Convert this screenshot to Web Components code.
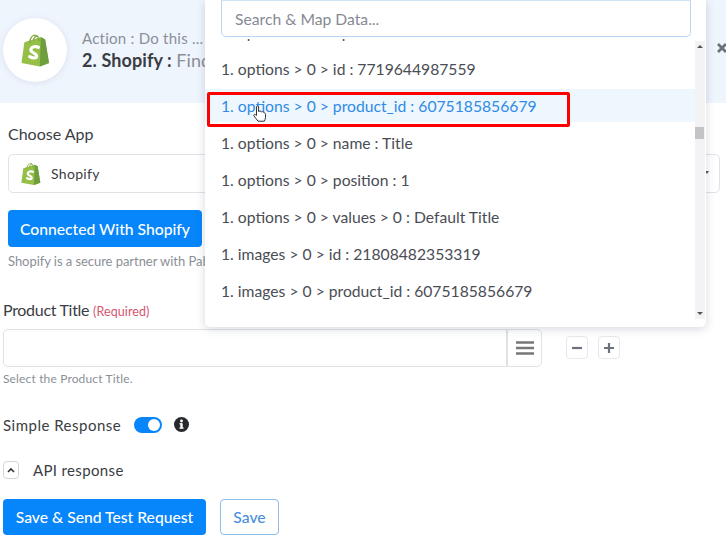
<!DOCTYPE html>
<html>
<head>
<meta charset="utf-8">
<title>Shopify action</title>
<style>
    html, body { margin: 0; height: 100%; background: #fff; overflow: hidden; }
    body { font-family: "Lato", "Liberation Sans", sans-serif; color: #3a3d44; }
</style>
</head>
<body>
<pb-shell>
    <pb-header slot="header" step="2. Shopify :" title-rest="Find" caption="Action : Do this ..."></pb-header>
    <pb-app-section></pb-app-section>
    <pb-product-section></pb-product-section>
    <pb-response-section></pb-response-section>
    <pb-map-dropdown>
        <pb-map-row>1. options &gt; 0 &gt; option1 : Title</pb-map-row>
        <pb-map-row>1. options &gt; 0 &gt; id : 7719644987559</pb-map-row>
        <pb-map-row active>1. options &gt; 0 &gt; product_id : 6075185856679</pb-map-row>
        <pb-map-row>1. options &gt; 0 &gt; name : Title</pb-map-row>
        <pb-map-row>1. options &gt; 0 &gt; position : 1</pb-map-row>
        <pb-map-row>1. options &gt; 0 &gt; values &gt; 0 : Default Title</pb-map-row>
        <pb-map-row>1. images &gt; 0 &gt; id : 21808482353319</pb-map-row>
        <pb-map-row>1. images &gt; 0 &gt; product_id : 6075185856679</pb-map-row>
    </pb-map-dropdown>
</pb-shell>

<script>
const bagSvg = `
    <svg viewBox="0 0 30 34" width="100%" height="100%" aria-hidden="true">
        <path d="M3.5 8.5 L20.5 3 L25 5.5 L29 30 L19.5 33.5 L0.5 30 Z" fill="#95bf47"/>
        <path d="M20.5 3 L25 5.5 L29 30 L19.5 33.5 Z" fill="#6f9e3f"/>
        <path d="M9 9 C9 3 13 0.8 15 1.2 C17.5 1.6 18.5 4 18.5 7.5 M13 7 C13 4 14.5 2 16.5 2.4" fill="none" stroke="#7da53a" stroke-width="1.3"/>
        <path d="M18 13.6 C15.5 12.4 10.4 12.8 10.2 16.4 C10 19.6 16.4 19.8 16.2 22.8 C16 25.4 12.2 25.2 9 23.4" fill="none" stroke="#fff" stroke-width="3.3" stroke-linecap="round"/>
    </svg>`;

class PbShell extends HTMLElement {
    constructor() {
        super();
        this.attachShadow({ mode: 'open' });
        this.shadowRoot.innerHTML = `
            <style>
                :host { display: block; position: relative; width: 726px; height: 551px; overflow: hidden; }
            </style>
            <slot name="header"></slot>
            <slot></slot>
        `;
    }
}

class PbHeader extends HTMLElement {
    constructor() {
        super();
        this.attachShadow({ mode: 'open' });
        this.shadowRoot.innerHTML = `
            <style>
                :host { display: flex; align-items: center; gap: 15px; height: 103px; padding: 0 0 3px 3px; box-sizing: border-box; background: #eff5fd; position: relative; }
                .logo { width: 64px; height: 64px; border-radius: 50%; background: #fff; box-shadow: 0 1px 6px rgba(60, 80, 120, .12); display: flex; align-items: center; justify-content: center; flex: none; }
                .logo div { width: 29px; height: 33px; }
                .text { margin-top: 2px; }
                .caption { font-size: 15px; color: #8b8f98; line-height: 18px; letter-spacing: .25px; white-space: nowrap; }
                .title { font-size: 18px; font-weight: 700; color: #3a3d44; line-height: 26px; white-space: nowrap; letter-spacing: .1px; }
                .title span { font-weight: 400; color: #8b8f98; }
                .close { position: absolute; right: -2px; top: 42px; width: 12px; height: 12px; }
            </style>
            <div class="logo"><div>${bagSvg}</div></div>
            <div class="text">
                <div class="caption">${this.getAttribute('caption')}</div>
                <div class="title">${this.getAttribute('step')} <span>${this.getAttribute('title-rest')}</span></div>
            </div>
            <svg class="close" viewBox="0 0 12 12"><path d="M2 2 L10 10 M10 2 L2 10" stroke="#6c727c" stroke-width="2.8" fill="none"/></svg>
        `;
    }
}

class PbButton extends HTMLElement {
    constructor() {
        super();
        this.attachShadow({ mode: 'open' });
        this.shadowRoot.innerHTML = `
            <style>
                :host { display: inline-flex; align-items: center; justify-content: center; height: 37px; box-sizing: border-box; border-radius: 4px; background: #0785fb; color: #fff; font-size: 15.7px; font-weight: 500; padding: 0 13px; white-space: nowrap; }
                :host([outline]) { background: #fff; color: #4a8fdc; border: 1px solid #8dbde8; }
            </style>
            <slot></slot>
        `;
    }
}

class PbAppSection extends HTMLElement {
    constructor() {
        super();
        this.attachShadow({ mode: 'open' });
        this.shadowRoot.innerHTML = `
            <style>
                :host { display: block; padding: 21px 6px 0 8px; }
                .label { font-size: 16px; line-height: 20px; color: #3a3d44; }
                .select { display: flex; align-items: center; gap: 10px; height: 39px; box-sizing: border-box; margin-top: 10px; padding: 0 12px; border: 1px solid #e1e2e6; border-radius: 5px; font-size: 14px; letter-spacing: .3px; position: relative; }
                .bag { width: 20px; height: 24px; }
                .caret { position: absolute; right: 10px; top: 16px; width: 0; height: 0; border: 2px solid transparent; border-top: 3px solid #555; }
                pb-button { margin-top: 17px; width: 194px; }
                .hint { font-size: 13px; line-height: 16px; margin-top: 6px; color: #8b8f98; white-space: nowrap; letter-spacing: -.05px; }
            </style>
            <div class="label">Choose App</div>
            <div class="select"><div class="bag">${bagSvg}</div>Shopify<i class="caret"></i></div>
            <pb-button>Connected With Shopify</pb-button>
            <div class="hint">Shopify is a secure partner with Pabbly</div>
        `;
    }
}

class PbProductSection extends HTMLElement {
    constructor() {
        super();
        this.attachShadow({ mode: 'open' });
        this.shadowRoot.innerHTML = `
            <style>
                :host { display: block; padding: 31px 0 0 3px; }
                .label { font-size: 16px; line-height: 20px; color: #3a3d44; letter-spacing: -.3px; }
                .label small { font-size: 12.5px; color: #d4566f; letter-spacing: .1px; }
                .row { display: flex; align-items: center; margin-top: 7px; }
                .input { width: 504px; height: 38px; box-sizing: border-box; border: 1px solid #e1e2e6; border-radius: 5px 0 0 5px; }
                .menu { width: 35px; height: 38px; box-sizing: border-box; border: 1px solid #e1e2e6; border-radius: 0 5px 5px 0; display: flex; align-items: center; justify-content: center; }
                .menu svg { width: 20px; height: 16px; }
                .steps { display: flex; gap: 10px; margin: -1px 0 0 24px; }
                .step { width: 22px; height: 23px; box-sizing: border-box; border: 1px solid #e8e9ee; border-radius: 4px; display: flex; align-items: center; justify-content: center; }
                .step svg { width: 12px; height: 12px; }
                .hint { font-size: 12px; line-height: 16px; margin-top: 4px; color: #8b8f98; letter-spacing: .15px; }
            </style>
            <div class="label">Product Title <small>(Required)</small></div>
            <div class="row">
                <div class="input"></div>
                <div class="menu"><svg viewBox="0 0 20 16"><path d="M1 2.5 H19 M1 8 H19 M1 13.5 H19" stroke="#777" stroke-width="2.4"/></svg></div>
                <div class="steps">
                    <div class="step"><svg viewBox="0 0 12 12"><path d="M1 6 H11" stroke="#6c727c" stroke-width="2.2"/></svg></div>
                    <div class="step"><svg viewBox="0 0 12 12"><path d="M1 6 H11 M6 1 V11" stroke="#6c727c" stroke-width="2.2"/></svg></div>
                </div>
            </div>
            <div class="hint">Select the Product Title.</div>
        `;
    }
}

class PbToggle extends HTMLElement {
    constructor() {
        super();
        this.attachShadow({ mode: 'open' });
        this.shadowRoot.innerHTML = `
            <style>
                :host { display: inline-flex; justify-content: flex-end; align-items: center; width: 28px; height: 16px; box-sizing: border-box; padding-right: 2px; border-radius: 8px; background: #0785fb; }
                i { width: 12px; height: 12px; border-radius: 50%; background: #fff; }
            </style>
            <i></i>
        `;
    }
}

class PbResponseSection extends HTMLElement {
    constructor() {
        super();
        this.attachShadow({ mode: 'open' });
        this.shadowRoot.innerHTML = `
            <style>
                :host { display: block; padding: 28px 0 0 3px; font-size: 15px; color: #3a3d44; letter-spacing: .5px; }
                .simple { display: flex; align-items: center; height: 20px; }
                pb-toggle { margin-left: 13px; }
                .info { width: 15px; height: 15px; margin-left: 12px; margin-top: -1px; }
                .api { display: flex; align-items: center; gap: 14px; height: 20px; margin-top: 25px; letter-spacing: .35px; }
                .chev { width: 16px; height: 18px; box-sizing: border-box; border: 1px solid #d4d5da; border-radius: 4px; display: flex; align-items: center; justify-content: center; }
                .chev svg { width: 8px; height: 6px; }
                .actions { display: flex; gap: 14px; margin-top: 19px; letter-spacing: 0; }
                .actions pb-button { height: 36px; }
                .actions pb-button:first-child { width: 203px; }
                .actions pb-button:last-child { width: 59px; }
            </style>
            <div class="simple">Simple Response<pb-toggle></pb-toggle>
                <svg class="info" viewBox="0 0 15 15"><circle cx="7.5" cy="7.5" r="7.5" fill="#26282c"/><rect x="6.3" y="6.4" width="2.4" height="5" fill="#fff"/><rect x="5.5" y="6.2" width="2.5" height="1.2" fill="#fff"/><rect x="5.4" y="10.5" width="4.2" height="1.2" fill="#fff"/><circle cx="7.5" cy="4" r="1.4" fill="#fff"/></svg>
            </div>
            <div class="api">
                <div class="chev"><svg viewBox="0 0 8 6"><path d="M1 5 L4 2 L7 5" fill="none" stroke="#333" stroke-width="1.6"/></svg></div>
                API response
            </div>
            <div class="actions">
                <pb-button>Save &amp; Send Test Request</pb-button>
                <pb-button outline>Save</pb-button>
            </div>
        `;
    }
}

class PbMapRow extends HTMLElement {
    constructor() {
        super();
        this.attachShadow({ mode: 'open' });
        this.shadowRoot.innerHTML = `
            <style>
                :host { display: flex; align-items: center; height: 37px; padding-left: 16px; box-sizing: border-box; font-size: 15.7px; color: #4a4d54; white-space: nowrap; }
                :host([active]) { color: #2f8be6; background: linear-gradient(#eef6fe, #eef6fe) 0 2px / 100% 33px no-repeat; }
            </style>
            <slot></slot>
        `;
    }
}

class PbMapDropdown extends HTMLElement {
    constructor() {
        super();
        this.attachShadow({ mode: 'open' });
        this.shadowRoot.innerHTML = `
            <style>
                :host { display: flex; flex-direction: column; position: absolute; left: 205px; top: 0; width: 501px; height: 327px; box-sizing: border-box; background: #fff; border-radius: 0 0 5px 5px; box-shadow: 0 2px 10px rgba(50, 60, 90, .2); }
                .search { margin: 0 15px 0 16px; height: 37px; flex: none; box-sizing: border-box; border: 1px solid #b9d6f3; border-top-color: #cfe2f6; border-radius: 0 0 5px 5px; padding-left: 13px; display: flex; align-items: center; font-size: 15.7px; color: #858a93; }
                .body { display: flex; flex: 1; min-height: 0; margin-top: 2px; margin-bottom: 8px; }
                .list { flex: 1; overflow: hidden; }
                .list .inner { margin-top: -26px; }
                .bar { width: 10px; flex: none; background: #f3f3f5; display: flex; flex-direction: column; align-items: center; position: relative; margin: 2px 1px 0 0; }
                .bar i { width: 0; height: 0; border: 3px solid transparent; }
                .up { border-bottom-color: #555 !important; border-top-width: 0 !important; margin-top: 4px; }
                .down { border-top-color: #555 !important; border-bottom-width: 0 !important; margin-top: auto; margin-bottom: 4px; }
                .thumb { position: absolute; top: 86px; left: 0; width: 9px; height: 12px; background: #c4c4c6; }
                .mark { position: absolute; left: 2px; top: 92px; width: 363px; height: 35px; box-sizing: border-box; border: 3px solid #f00; border-radius: 2px; }
                .hand { position: absolute; left: 48px; top: 105px; width: 13px; height: 17px; }
            </style>
            <div class="search">Search &amp; Map Data...</div>
            <div class="body">
                <div class="list"><div class="inner"><slot></slot></div></div>
                <div class="bar"><i class="up"></i><div class="thumb"></div><i class="down"></i></div>
            </div>
            <div class="mark"></div>
            <svg class="hand" viewBox="0 0 13 17"><path d="M3.5 9 V2 C3.5 0.6 5.6 0.6 5.6 2 V6.5 C7 6 8 6 8.6 6.8 C9.8 6.5 10.6 7 11 7.8 C12 7.8 12.5 8.5 12.5 9.5 V12.5 C12.5 14 11.8 15 11.3 16.2 H5 C3.8 14.5 2.5 13 1 11 C0.2 9.8 1.6 8.5 3.5 10.5 Z" fill="#fff" stroke="#333" stroke-width="1"/></svg>
        `;
    }
}

customElements.define('pb-shell', PbShell);
customElements.define('pb-header', PbHeader);
customElements.define('pb-button', PbButton);
customElements.define('pb-toggle', PbToggle);
customElements.define('pb-app-section', PbAppSection);
customElements.define('pb-product-section', PbProductSection);
customElements.define('pb-response-section', PbResponseSection);
customElements.define('pb-map-row', PbMapRow);
customElements.define('pb-map-dropdown', PbMapDropdown);
</script>
</body>
</html>
